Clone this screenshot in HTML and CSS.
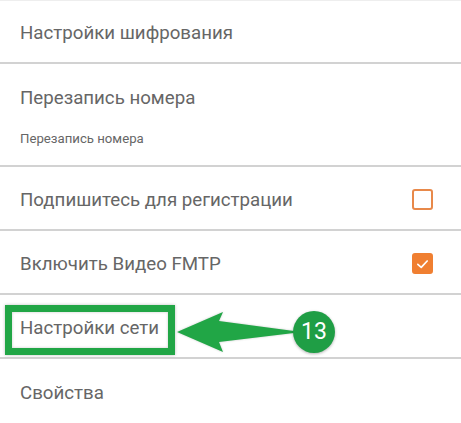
FILE: index.html
```html
<!DOCTYPE html>
<html lang="ru">
<head>
  <meta charset="UTF-8" />
  <meta name="viewport" content="width=device-width, initial-scale=1.0"/>
  <title>Настройки</title>
  <link rel="stylesheet" href="styles.css">
</head>
<body>
  <div class="settings">
    <div class="row row-first">
      <span class="label">Настройки шифрования</span>
    </div>

    <div class="row row-double">
      <span class="label">Перезапись номера</span>
      <span class="sub">Перезапись номера</span>
    </div>

    <div class="row row-check">
      <span class="label">Подпишитесь для регистрации</span>
      <span class="checkbox"></span>
    </div>

    <div class="row row-check">
      <span class="label">Включить Видео FMTP</span>
      <span class="checkbox checked">
        <svg viewBox="0 0 20 20" width="20" height="20">
          <path d="M4.5 10.5 L8.5 14 L15.5 6.5" fill="none" stroke="#fff" stroke-width="2" stroke-linecap="round" stroke-linejoin="round"/>
        </svg>
      </span>
    </div>

    <!-- Highlighted row with callout -->
    <div class="row row-network">
      <span class="label">Настройки сети</span>
      <div class="highlight"></div>
      <svg class="arrow" viewBox="0 0 120 44" width="120" height="44">
        <path d="M0 21 L46 1 L42 10 L117 20 L117 22 L42 31 L46 41 Z" fill="#21a646"/>
      </svg>
      <div class="badge">13</div>
    </div>

    <div class="row row-last">
      <span class="label">Свойства</span>
    </div>
  </div>
</body>
</html>
```

FILE: styles.css
```css
/* Page */
body {
  margin: 0;
  background: #fff;
  font-family: Roboto, "Noto Sans", Arial, sans-serif;
  color: #666666;
}

.settings {
  width: 461px;
  border-top: 1px solid #eeeeee;
}

/* Rows */
.row {
  display: flex;
  align-items: center;
  padding: 3px 20px 0;
  box-sizing: border-box;
  border-bottom: 2px solid #d2d2d2;
}

.row-first { height: 63px; }
.row-check { height: 64px; justify-content: space-between; padding-right: 28px; }
.row-network { height: 64px; position: relative; }
.row-last { height: 64px; border-bottom: none; }

.label {
  font-size: 18.7px;
}

/* Two-line row */
.row-double {
  height: 103px;
  flex-direction: column;
  align-items: flex-start;
  justify-content: flex-start;
  padding-top: 23px;
}
.row-double .sub {
  font-size: 13.2px;
  margin-top: 22px;
}

/* Checkboxes */
.checkbox {
  width: 21px;
  height: 21px;
  box-sizing: border-box;
  border: 2px solid #e8894a;
  border-radius: 3px;
  display: flex;
  align-items: center;
  justify-content: center;
}
.checkbox.checked {
  background: #f07f31;
  border-color: #f07f31;
}

/* Callout */
.highlight {
  position: absolute;
  left: 5px;
  top: 10px;
  width: 170px;
  height: 50px;
  box-sizing: border-box;
  border: 7px solid #21a646;
  box-shadow: 0 0 3px rgba(0, 0, 0, 0.25), inset 0 0 3px rgba(0, 0, 0, 0.2);
}

.arrow {
  position: absolute;
  left: 177px;
  top: 16px;
  filter: drop-shadow(0 0 1px rgba(0, 0, 0, 0.2));
}

.badge {
  position: absolute;
  left: 293px;
  top: 16px;
  width: 42px;
  height: 42px;
  border-radius: 50%;
  background: #1f9e45;
  color: #fff;
  font-size: 23px;
  line-height: 42px;
  text-align: center;
  box-shadow: 0 1px 3px rgba(0, 0, 0, 0.3);
}
```
